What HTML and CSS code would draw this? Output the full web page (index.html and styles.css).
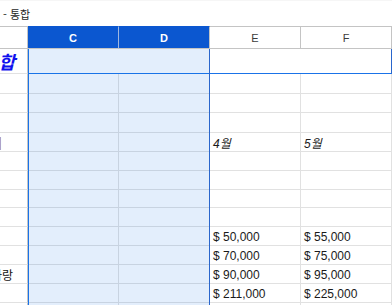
FILE: index.html
```html
<!DOCTYPE html>
<html lang="ko">
<head>
    <meta charset="UTF-8">
    <meta name="viewport" content="width=device-width, initial-scale=1.0">
    <title>통합</title>
    <link rel="stylesheet" href="styles.css">
</head>
<body>

    <!-- Title strip -->
    <div class="titlebar">- 통합</div>

    <div class="sheet">
        <!-- Column headers -->
        <div class="hd"></div>
        <div class="hd hd-sel">C</div>
        <div class="hd hd-sel">D</div>
        <div class="hd">E</div>
        <div class="hd">F</div>

        <!-- Row 1 -->
        <div class="cell col-b title-cell"><span>통합</span></div>
        <div class="cell span2 range-edge"></div>
        <div class="cell span2 range-edge"></div>

        <!-- Rows 2-4 -->
        <div class="cell col-b"></div><div class="cell"></div><div class="cell"></div><div class="cell"></div><div class="cell"></div>
        <div class="cell col-b"></div><div class="cell"></div><div class="cell"></div><div class="cell"></div><div class="cell"></div>
        <div class="cell col-b"></div><div class="cell"></div><div class="cell"></div><div class="cell"></div><div class="cell"></div>

        <!-- Month labels -->
        <div class="cell col-b clip-right label-brown"><span>항목 비</span></div>
        <div class="cell"></div><div class="cell"></div>
        <div class="cell month">4월</div>
        <div class="cell month">5월</div>

        <div class="cell col-b"></div><div class="cell"></div><div class="cell"></div><div class="cell"></div><div class="cell"></div>
        <div class="cell col-b"></div><div class="cell"></div><div class="cell"></div><div class="cell"></div><div class="cell"></div>
        <div class="cell col-b"></div><div class="cell"></div><div class="cell"></div><div class="cell"></div><div class="cell"></div>
        <div class="cell col-b"></div><div class="cell"></div><div class="cell"></div><div class="cell"></div><div class="cell"></div>

        <!-- Values -->
        <div class="cell col-b"></div><div class="cell"></div><div class="cell"></div>
        <div class="cell num">$ 50,000</div>
        <div class="cell num">$ 55,000</div>

        <div class="cell col-b"></div><div class="cell"></div><div class="cell"></div>
        <div class="cell num">$ 70,000</div>
        <div class="cell num">$ 75,000</div>

        <div class="cell col-b clip-right name-cell"><span>사랑</span></div>
        <div class="cell"></div><div class="cell"></div>
        <div class="cell num">$ 90,000</div>
        <div class="cell num">$ 95,000</div>

        <div class="cell col-b"></div><div class="cell"></div><div class="cell"></div>
        <div class="cell num">$ 211,000</div>
        <div class="cell num">$ 225,000</div>

        <div class="cell col-b"></div><div class="cell"></div><div class="cell"></div><div class="cell"></div><div class="cell"></div>

        <!-- Column C:D selection overlay -->
        <div class="selection"></div>
    </div>

</body>
</html>
```

FILE: styles.css
```css
/* Переменные */
:root {
    --grid-line: #e1e1e1;
    --header-line: #c4c4c4;
    --sel-blue: #0b57d0;
    --range-blue: #1a73e8;
    --text-color: #1a1a1a;
}

* {
    margin: 0;
    padding: 0;
    box-sizing: border-box;
}

body {
    width: 392px;
    height: 305px;
    overflow: hidden;
    background: #ffffff;
    font-family: 'Liberation Sans', Arial, 'Noto Sans CJK KR', sans-serif;
    color: var(--text-color);
}

.titlebar {
    height: 26px;
    padding-left: 3px;
    display: flex;
    align-items: center;
    font-size: 11px;
    color: #1f1f1f;
    font-family: 'Noto Sans CJK KR', sans-serif;
    border-top: 1px solid #f6f6f6;
}

/* Grid */
.sheet {
    position: relative;
    display: grid;
    grid-template-columns: 28px 91px 91px 91px 91px;
    grid-template-rows: 23px 25px 20px 19px 20px 19px 19px 19px 18px 19px 19px 19px 19px 19px 3px;
}

.hd {
    border-top: 1px solid var(--header-line);
    border-bottom: 1px solid var(--header-line);
    border-right: 1px solid var(--header-line);
    display: flex;
    align-items: center;
    justify-content: center;
    font-size: 11px;
    color: #3c3c3c;
}

.hd-sel {
    background: var(--sel-blue);
    color: #ffffff;
    font-weight: bold;
    border-top-color: var(--sel-blue);
    border-right-color: #9fb7e0;
}

.hd-sel + .hd-sel {
    border-right-color: var(--header-line);
}

.cell {
    border-right: 1px solid var(--grid-line);
    border-bottom: 1px solid var(--grid-line);
    display: flex;
    align-items: center;
    padding-left: 3px;
    font-size: 12px;
    white-space: nowrap;
    overflow: hidden;
}

.col-b {
    border-right-color: var(--header-line);
}

.span2 {
    grid-column: span 2;
}

.range-edge {
    border-bottom-color: var(--range-blue);
    border-right-color: #2a66cc;
}

.clip-right {
    justify-content: flex-end;
    padding-left: 0;
}

.title-cell {
    justify-content: flex-end;
    padding-left: 0;
    padding-right: 12px;
    font-family: 'Noto Sans CJK KR', sans-serif;
    font-size: 18px;
    font-weight: bold;
    font-style: italic;
    color: #1010ee;
}

.label-brown {
    padding-right: 25px;
    font-family: 'Noto Sans CJK KR', sans-serif;
    font-weight: bold;
    font-size: 13px;
    color: #a25b10;
}

.name-cell {
    padding-right: 14px;
    font-family: 'Noto Sans CJK KR', sans-serif;
    font-size: 12px;
    color: #111111;
}

.month {
    font-style: italic;
    font-family: 'Liberation Sans', 'Noto Sans CJK KR', sans-serif;
}

.num {
    padding-top: 1px;
}

/* Выделение колонок C:D */
.selection {
    position: absolute;
    left: 28px;
    top: 23px;
    width: 182px;
    bottom: 0;
    background: rgba(26, 115, 232, 0.12);
    border-left: 1px solid var(--range-blue);
    border-right: 1px solid #2a66cc;
    pointer-events: none;
}
```
